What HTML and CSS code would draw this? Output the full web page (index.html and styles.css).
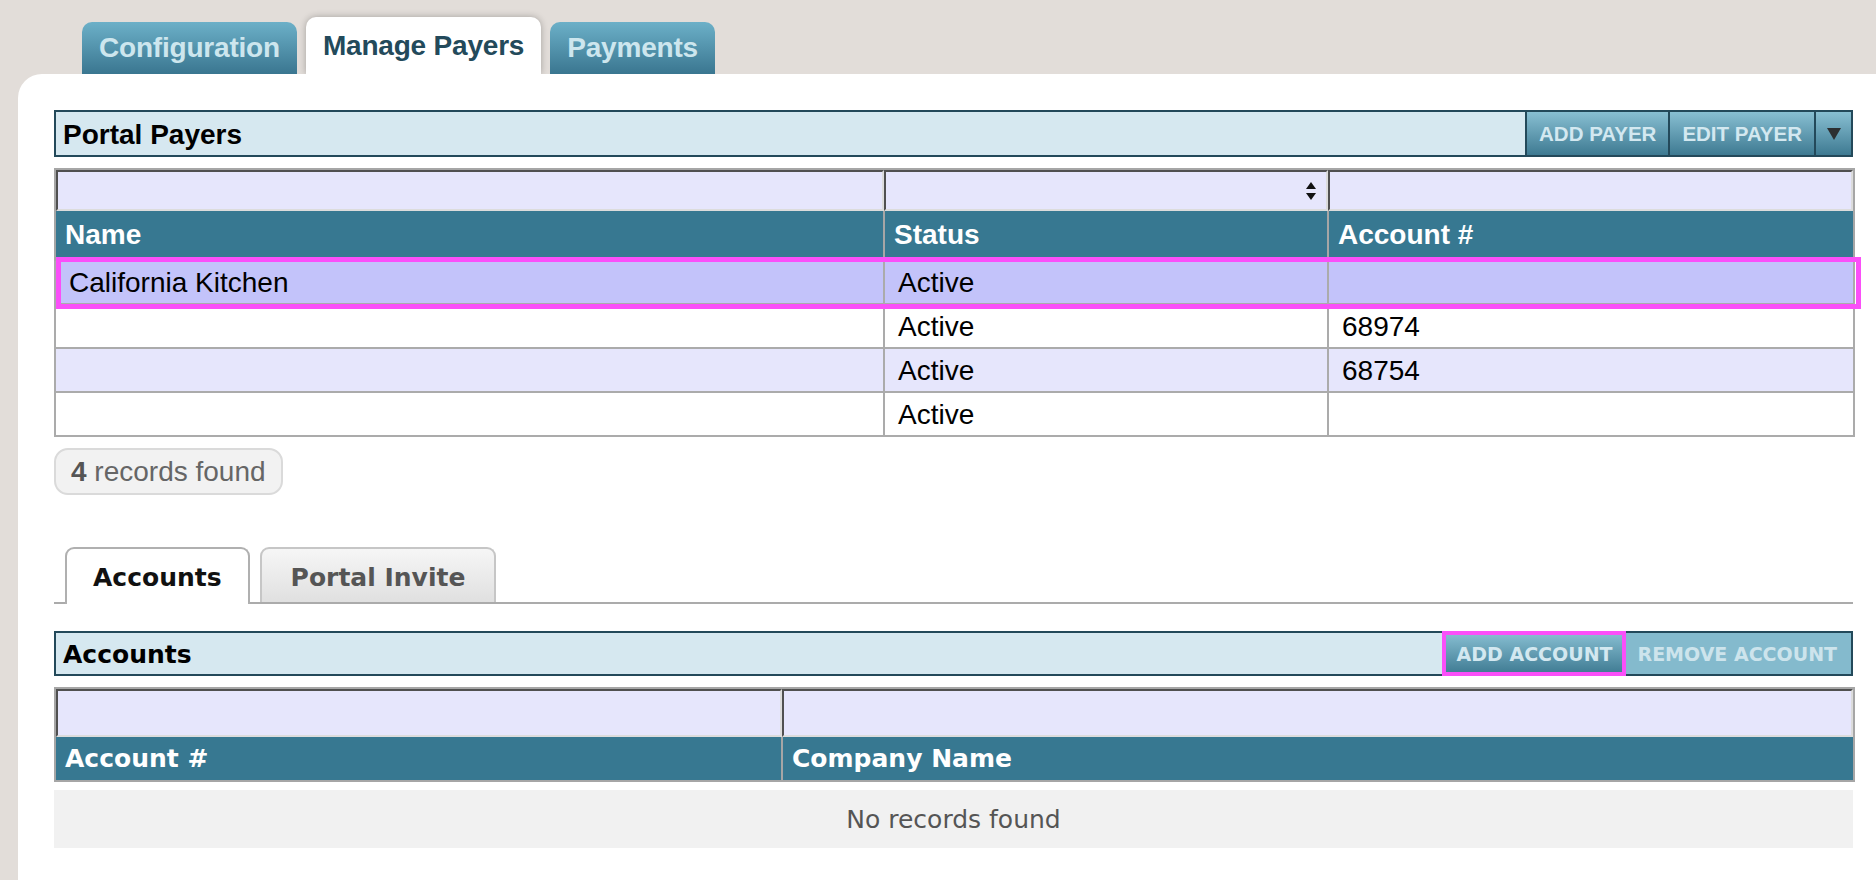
FILE: index.html
```html
<!DOCTYPE html>
<html lang="en">
<head>
<meta charset="utf-8">
<title>Manage Payers</title>
<link rel="stylesheet" href="styles.css">
</head>
<body>
<div class="top-tabs">
  <div class="ttab">Configuration</div>
  <div class="ttab active">Manage Payers</div>
  <div class="ttab">Payments</div>
</div>
<div class="panel">
  <div class="bar">
    <div class="bar-title">Portal Payers</div>
    <div class="bar-btns">
      <button class="btn">ADD PAYER</button>
      <button class="btn">EDIT PAYER</button>
      <button class="btn btn-dd"><svg width="14" height="12" viewBox="0 0 14 12"><polygon points="0,0 14,0 7,12" fill="#2c2f31"/></svg></button>
    </div>
  </div>

  <div class="grid-wrap">
    <table class="grid">
      <colgroup><col class="c-name"><col class="c-status"><col class="c-acct"></colgroup>
      <thead>
        <tr class="filter">
          <th><div class="finput"></div></th>
          <th><div class="finput fselect"><svg class="sort" width="10" height="18" viewBox="0 0 10 18"><polygon points="0,7 5,0 10,7" fill="#111"/><polygon points="0,11 10,11 5,18" fill="#111"/></svg></div></th>
          <th><div class="finput"></div></th>
        </tr>
        <tr class="head">
          <th>Name</th>
          <th>Status</th>
          <th>Account #</th>
        </tr>
      </thead>
      <tbody>
        <tr class="sel"><td>California Kitchen</td><td>Active</td><td></td></tr>
        <tr><td></td><td>Active</td><td>68974</td></tr>
        <tr class="alt"><td></td><td>Active</td><td>68754</td></tr>
        <tr><td></td><td>Active</td><td></td></tr>
      </tbody>
    </table>
    <div class="hl-row"></div>
  </div>

  <div class="pill"><b>4</b>&nbsp;records found</div>

  <div class="subtabs">
    <div class="stab active">Accounts</div>
    <div class="stab">Portal Invite</div>
  </div>

  <div class="bar bar2">
    <div class="bar-title">Accounts</div>
    <div class="bar-btns">
      <button class="btn btn2 marked">ADD ACCOUNT</button>
      <button class="btn btn2 disabled">REMOVE ACCOUNT</button>
    </div>
  </div>

  <table class="grid grid2">
    <colgroup><col class="c-acno"><col class="c-company"></colgroup>
    <thead>
      <tr class="filter">
        <th><div class="finput"></div></th>
        <th><div class="finput"></div></th>
      </tr>
      <tr class="head">
        <th>Account #</th>
        <th>Company Name</th>
      </tr>
    </thead>
  </table>
  <div class="empty">No records found</div>
</div>
</body>
</html>
```

FILE: styles.css
```css
html, body {
  margin: 0;
  padding: 0;
}
body {
  background: #e2ddd9;
  font-family: "Liberation Sans", Arial, Helvetica, sans-serif;
  height: 880px;
  overflow: hidden;
}

/* top tabs */
.top-tabs {
  display: flex;
  align-items: flex-end;
  gap: 9px;
  padding: 17px 0 0 82px;
  height: 57px;
}
.ttab {
  height: 52px;
  padding: 0 17px;
  display: flex;
  align-items: center;
  font-weight: bold;
  font-size: 28px;
  letter-spacing: -0.2px;
  color: #cde6ee;
  background: linear-gradient(#6cb0c8, #3a7690);
  border-radius: 10px 10px 0 0;
}
.ttab.active {
  height: 57px;
  background: #fff;
  color: #234a5b;
  box-shadow: 0 0 7px rgba(0, 0, 0, 0.28);
}

/* panel */
.panel {
  position: relative;
  margin-left: 18px;
  background: #fff;
  border-top-left-radius: 24px;
  padding: 36px 23px 40px 36px;
  min-height: 760px;
}

/* header bars */
.bar {
  display: flex;
  height: 47px;
  box-sizing: border-box;
  border: 2px solid #23495a;
  background: #d6e8f0;
}
.bar-title {
  flex: 1;
  display: flex;
  align-items: center;
  padding-left: 7px;
  padding-top: 2px;
  font-weight: bold;
  font-size: 28px;
  color: #000;
}
.bar-btns {
  display: flex;
}
.btn {
  border: none;
  border-left: 2px solid #23495a;
  margin: 0;
  padding: 0 12px;
  background: linear-gradient(#88bfd2, #3e7a92);
  color: #d3e8f0;
  font-family: "Liberation Sans", Arial, sans-serif;
  font-weight: bold;
  font-size: 20.5px;
  display: flex;
  align-items: center;
}
.btn-dd {
  width: 37px;
  padding: 0;
  justify-content: center;
}

/* grids */
.grid-wrap {
  position: relative;
  margin-top: 11px;
}
.grid {
  width: 100%;
  border-collapse: collapse;
  table-layout: fixed;
  border: 2px solid #a6a6a6;
}
.c-name { width: 829px; }
.c-status { width: 444px; }
.c-acct { width: 526px; }
.filter th {
  padding: 0;
  border: none;
}
.finput {
  position: relative;
  height: 41px;
  box-sizing: border-box;
  border: 2px solid;
  border-color: #505050 #dcdcdc #dcdcdc #505050;
  background: #e6e6fc;
}
.sort {
  position: absolute;
  right: 10px;
  top: 10px;
}
.head th {
  background: #377891;
  color: #fff;
  font-weight: bold;
  font-size: 28px;
  text-align: left;
  padding: 0 9px;
  height: 48px;
  border: 2px solid #a6a6a6;
  border-top: none;
}
.grid td {
  font-size: 28px;
  color: #000;
  padding: 2px 13px 0;
  height: 40px;
  border: 2px solid #ababab;
  background: #fff;
}
.grid tr.alt td {
  background: #e6e6fc;
}
.grid tr.sel td {
  background: #c3c3fa;
}
.hl-row {
  position: absolute;
  left: 2px;
  top: 89px;
  width: 1805px;
  height: 52px;
  box-sizing: border-box;
  border: 5px solid #fa4ff9;
  pointer-events: none;
}

/* count pill */
.pill {
  display: inline-flex;
  align-items: center;
  margin-top: 11px;
  height: 47px;
  box-sizing: border-box;
  padding: 1px 15px 0;
  border: 2px solid #dadada;
  border-radius: 14px;
  background: #f2f2f2;
  color: #666;
  font-size: 28px;
}
.pill b {
  color: #555;
}

/* sub tabs */
.subtabs {
  display: flex;
  gap: 10px;
  margin-top: 52px;
  padding-left: 11px;
  height: 55px;
  border-bottom: 2px solid #ababab;
  align-items: flex-end;
}
.stab {
  height: 55px;
  box-sizing: border-box;
  padding: 4px 29px 0;
  display: flex;
  align-items: center;
  border: 2px solid #c6c6c6;
  border-bottom: none;
  border-radius: 9px 9px 0 0;
  background: linear-gradient(#f6f6f6, #e0e0e0);
  color: #555;
  font-family: "DejaVu Sans", Verdana, sans-serif;
  font-weight: bold;
  font-size: 25px;
}
.stab.active {
  height: 57px;
  margin-bottom: -2px;
  padding: 4px 26px 2px;
  background: #fff;
  border-color: #b0b0b0;
  color: #111;
}

/* accounts bar */
.bar2 {
  margin-top: 27px;
  height: 45px;
}
.bar2 .bar-title {
  font-family: "DejaVu Sans", Verdana, sans-serif;
  font-size: 25px;
}
.btn2 {
  font-family: "DejaVu Sans", Verdana, sans-serif;
  font-size: 19px;
  padding: 0 11px;
}
.btn2.marked {
  outline: 4px solid #fa4ff9;
  outline-offset: -2px;
  position: relative;
}
.btn2.disabled {
  background: #84bacd;
  color: #cde4ec;
  border-left: none;
  padding: 0 14px;
}

.grid2 {
  margin-top: 11px;
}
.c-acno { width: 727px; }
.c-company { width: 1072px; }
.grid2 .finput {
  height: 48px;
}
.grid2 .head th {
  font-family: "DejaVu Sans", Verdana, sans-serif;
  font-size: 25px;
  height: 43px;
}
.empty {
  margin-top: 8px;
  height: 58px;
  line-height: 60px;
  background: #f1f1f1;
  text-align: center;
  font-family: "DejaVu Sans", Verdana, sans-serif;
  font-size: 25px;
  color: #555;
}
```
